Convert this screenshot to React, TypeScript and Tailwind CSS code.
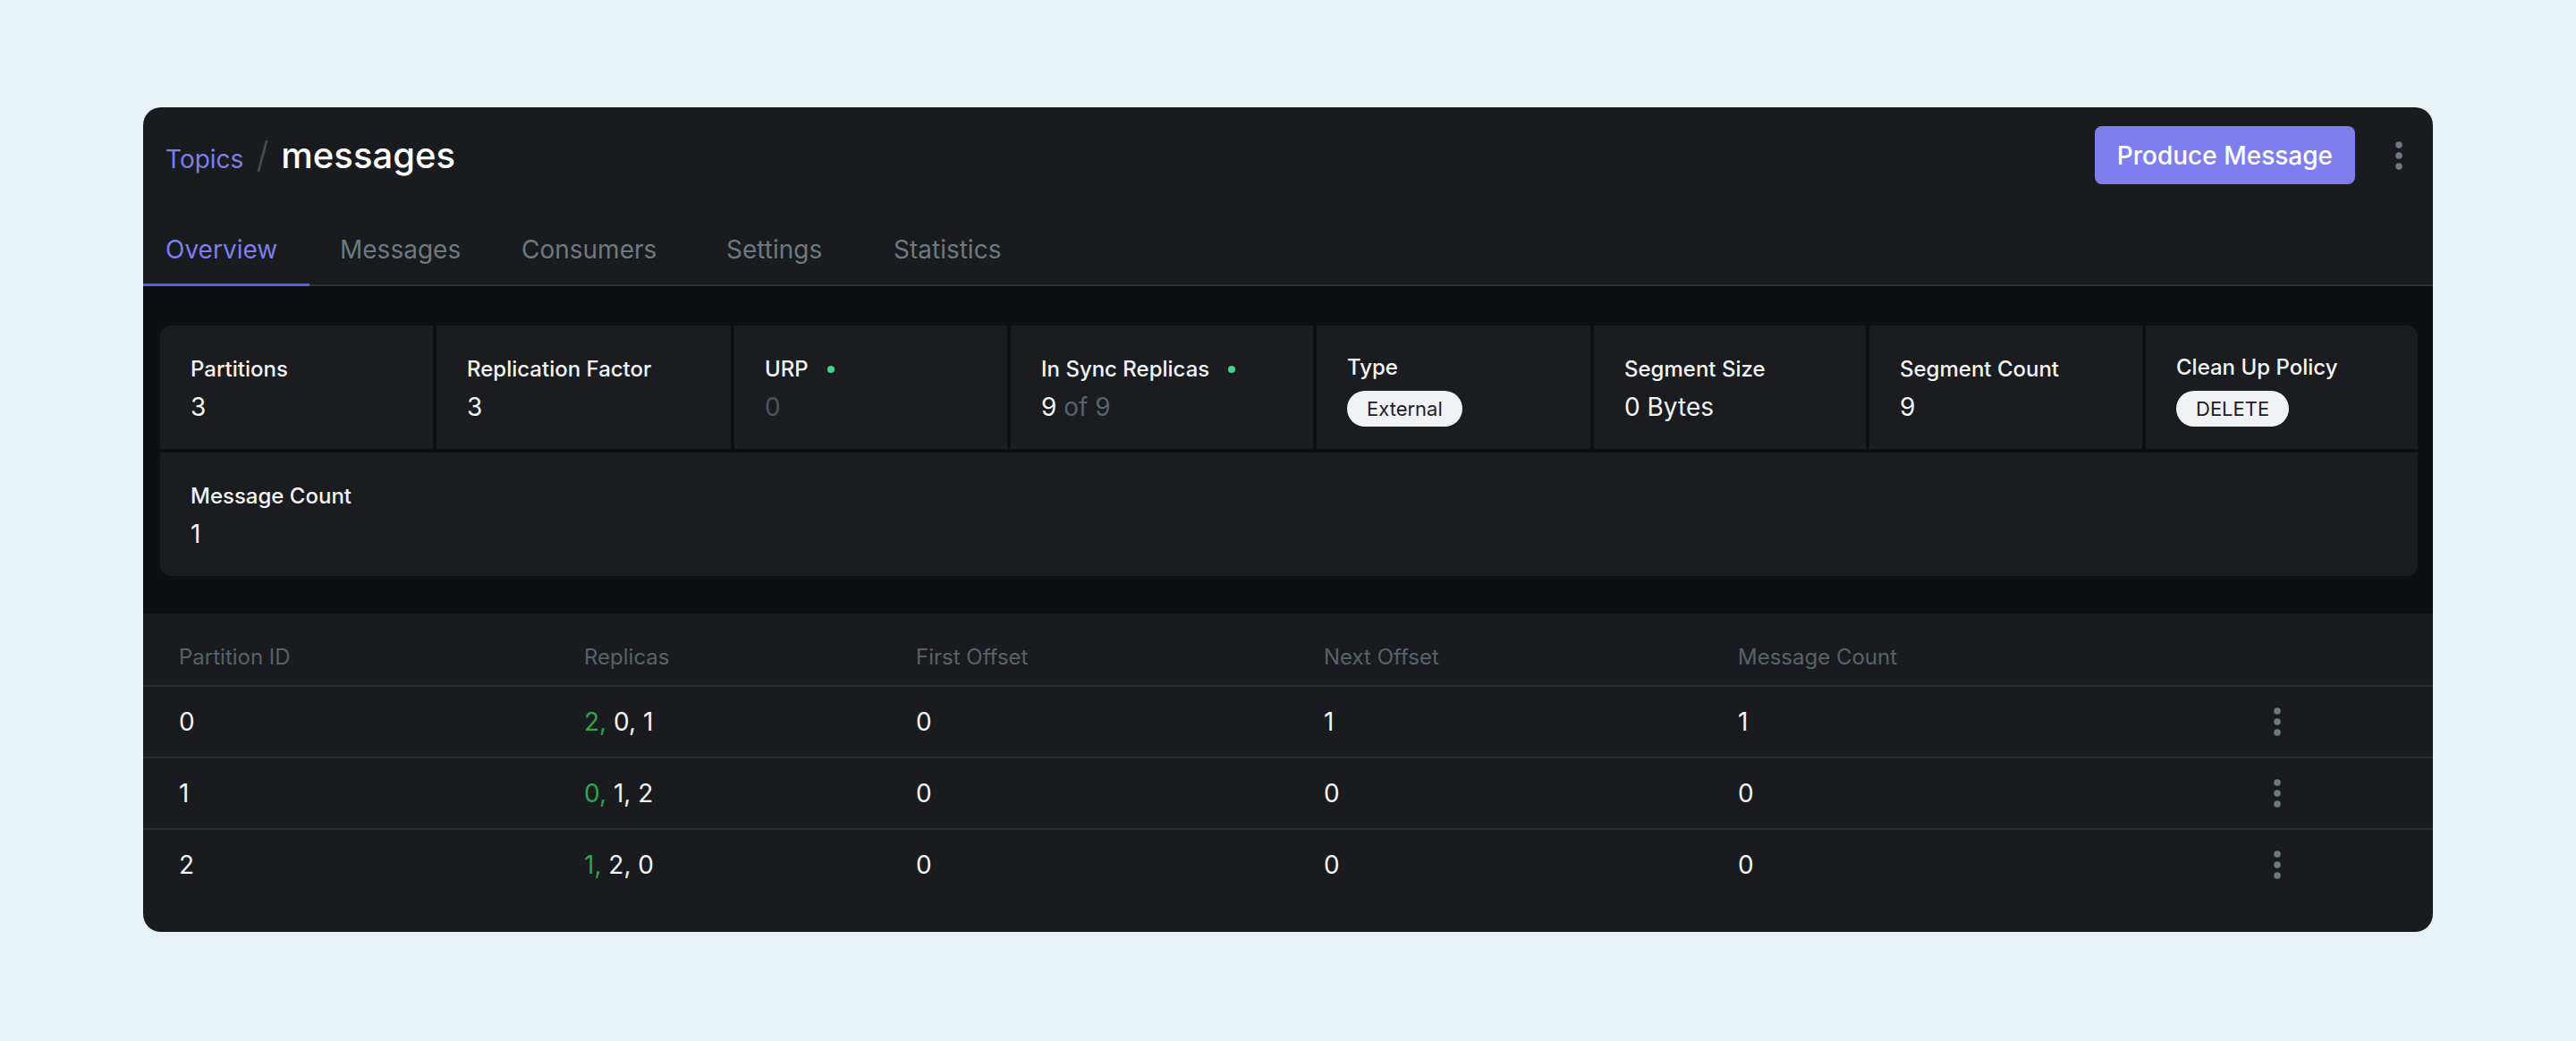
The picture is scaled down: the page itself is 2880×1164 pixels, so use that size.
import { ReactNode } from 'react'

type Stat = {
  label: string
  value: ReactNode
  dot?: boolean
  badge?: boolean
}

const stats: Stat[] = [
  { label: 'Partitions', value: '3' },
  { label: 'Replication Factor', value: '3' },
  { label: 'URP', value: <span className="text-[#4b575d]">0</span>, dot: true },
  {
    label: 'In Sync Replicas',
    value: (
      <>
        9 <span className="text-[#56646b]">of 9</span>
      </>
    ),
    dot: true,
  },
  { label: 'Type', value: <Badge>External</Badge>, badge: true },
  { label: 'Segment Size', value: '0 Bytes' },
  { label: 'Segment Count', value: '9' },
  { label: 'Clean Up Policy', value: <Badge>DELETE</Badge>, badge: true },
]

const partitions = [
  { id: 0, leader: 2, rest: '0, 1', first: 0, next: 1, count: 1 },
  { id: 1, leader: 0, rest: '1, 2', first: 0, next: 0, count: 0 },
  { id: 2, leader: 1, rest: '2, 0', first: 0, next: 0, count: 0 },
]

const tabs = [
  { name: 'Overview', cls: 'w-[186px] pl-[25px]' },
  { name: 'Messages', cls: 'w-[203px] pl-[34px]' },
  { name: 'Consumers', cls: 'w-[229px] pl-[34px]' },
  { name: 'Settings', cls: 'w-[187px] pl-[34px]' },
  { name: 'Statistics', cls: 'px-[34px]' },
]

function Badge({ children }: { children: ReactNode }) {
  return (
    <span className="inline-flex self-start rounded-full bg-[#f1f2f4] px-[22px] py-[4px] text-[22px] leading-[32px] text-[#1d2125]">
      {children}
    </span>
  )
}

function Kebab({ className = '' }: { className?: string }) {
  return (
    <svg width="8" height="32" viewBox="0 0 8 32" className={className} aria-hidden>
      <circle cx="4" cy="4" r="3.8" fill="currentColor" />
      <circle cx="4" cy="16" r="3.8" fill="currentColor" />
      <circle cx="4" cy="28" r="3.8" fill="currentColor" />
    </svg>
  )
}

function StatCell({ stat }: { stat: Stat }) {
  return (
    <div className="flex min-h-[138px] flex-col justify-center bg-[#1b1c1f] pt-[31px] pb-[25px] pl-[34px]">
      <div className="flex items-center text-[24px] leading-[32px] font-medium text-[#f3f4f6]">
        {stat.label}
        {stat.dot && <span className="ml-[21px] h-[8px] w-[8px] rounded-full bg-[#45d483]" />}
      </div>
      {stat.badge ? (
        <div className="mt-[10px] flex">{stat.value}</div>
      ) : (
        <div className="mt-[6px] text-[28px] leading-[40px] text-[#f3f4f6]">{stat.value}</div>
      )}
    </div>
  )
}

export default function App() {
  return (
    <div className="h-[1164px] w-full bg-[#e8f1f4] pt-[120px] font-[Inter,sans-serif]">
      <div className="mx-[160px] overflow-hidden rounded-[20px] bg-[#1a1b1e]">
        {/* header */}
        <div className="flex items-center justify-between pt-[21px] pl-[25px] pr-[34px]">
          <div className="flex items-baseline">
            <span className="text-[28px] text-[#7b7fe8]">Topics</span>
            <span className="mx-[14px] text-[40px] font-light text-[#4a5156]">/</span>
            <h1 className="text-[40px] font-medium text-white">messages</h1>
          </div>
          <div className="flex items-center gap-[45px]">
            <button className="h-[65px] rounded-[8px] bg-[#7f7eee] px-[25px] text-[28px] font-medium text-white">
              Produce Message
            </button>
            <Kebab className="text-[#6d7a80]" />
          </div>
        </div>

        {/* tabs */}
        <div className="mt-[53px] flex border-b-2 border-[#2b3034]">
          {tabs.map((tab, i) => (
            <button
              key={tab.name}
              className={
                '-mb-[2px] border-b-[3px] pb-[18px] text-left text-[28px] leading-[40px] ' +
                tab.cls +
                ' ' +
                (i === 0 ? 'border-[#5a5de6] text-[#7b7fec]' : 'border-transparent text-[#6b7a80]')
              }
            >
              {tab.name}
            </button>
          ))}
        </div>

        {/* stats band */}
        <div className="bg-[#0e0f11] pt-[44px] pb-[42px] pl-[19px] pr-[17px]">
          <div className="grid grid-cols-[305px_329px_305px_338px_306px_304px_305px_1fr] gap-[4px] overflow-hidden rounded-[12px]">
            {stats.map((s) => (
              <StatCell key={s.label} stat={s} />
            ))}
            <div className="col-span-8 flex min-h-[138px] flex-col justify-center bg-[#1b1c1f] pt-[31px] pb-[25px] pl-[34px]">
              <div className="text-[24px] leading-[32px] font-medium text-[#f3f4f6]">Message Count</div>
              <div className="mt-[6px] text-[28px] leading-[40px] text-[#f3f4f6]">1</div>
            </div>
          </div>
        </div>

        {/* partitions table */}
        <div className="pb-[36px]">
          <div className="grid grid-cols-[453px_371px_456px_463px_583px_40px] border-b-2 border-[#283034] pt-[33px] pb-[15px] pl-[40px] text-[24px] leading-[32px] text-[#56636a]">
            <div>Partition ID</div>
            <div>Replicas</div>
            <div>First Offset</div>
            <div>Next Offset</div>
            <div>Message Count</div>
            <div />
          </div>
          {partitions.map((p, i) => (
            <div
              key={p.id}
              className={
                'grid grid-cols-[453px_371px_456px_463px_583px_40px] items-center py-[19px] pl-[40px] text-[28px] leading-[40px] text-[#f3f4f6] ' +
                (i < partitions.length - 1 ? 'border-b-2 border-[#283034]' : '')
              }
            >
              <div>{p.id}</div>
              <div>
                <span className="text-[#2ea44f]">{p.leader},</span> {p.rest}
              </div>
              <div>{p.first}</div>
              <div>{p.next}</div>
              <div>{p.count}</div>
              <div className="flex justify-center">
                <Kebab className="text-[#6d7a80]" />
              </div>
            </div>
          ))}
        </div>
      </div>
    </div>
  )
}
